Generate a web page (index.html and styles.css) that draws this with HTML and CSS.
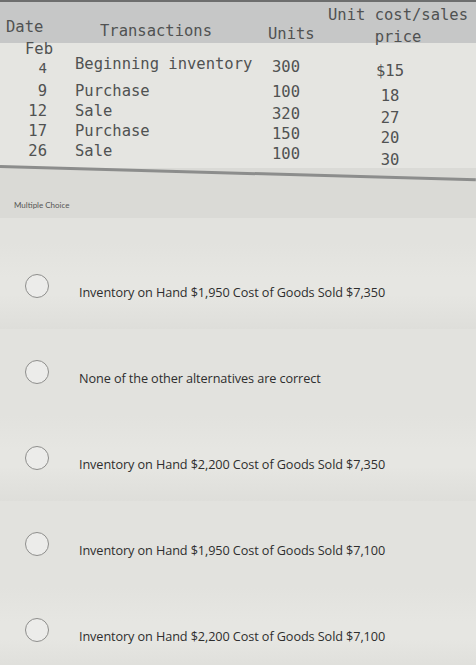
FILE: index.html
```html
<!DOCTYPE html>
<html>
<head>
<meta charset="utf-8">
<link rel="stylesheet" href="styles.css">
</head>
<body>
<div class="page">
  <div class="thead">
    <div class="h-date">Date</div>
    <div class="h-trans">Transactions</div>
    <div class="h-units">Units</div>
    <div class="h-price">Unit cost/sales<br>price</div>
  </div>
  <div class="tbody">
    <div class="feb">Feb</div>
    <div class="row first">
      <div class="c-date d1">4</div><div class="c-trans">Beginning inventory</div><div class="c-units">300</div><div class="c-price">$15</div>
    </div>
    <div class="row second">
      <div class="c-date">9</div><div class="c-trans">Purchase</div><div class="c-units u1">100</div><div class="c-price p1">18</div>
    </div>
    <div class="row">
      <div class="c-date">12</div><div class="c-trans">Sale</div><div class="c-units">320</div><div class="c-price">27</div>
    </div>
    <div class="row">
      <div class="c-date">17</div><div class="c-trans">Purchase</div><div class="c-units">150</div><div class="c-price">20</div>
    </div>
    <div class="row">
      <div class="c-date">26</div><div class="c-trans">Sale</div><div class="c-units">100</div><div class="c-price p-last">30</div>
    </div>
    <div class="rule"></div>
  </div>
  <div class="mc-label">Multiple Choice</div>
  <div class="options">
    <div class="option band"><span class="radio"></span><span class="opt-text">Inventory on Hand $1,950 Cost of Goods Sold $7,350</span></div>
    <div class="option"><span class="radio"></span><span class="opt-text">None of the other alternatives are correct</span></div>
    <div class="option band"><span class="radio"></span><span class="opt-text">Inventory on Hand $2,200 Cost of Goods Sold $7,350</span></div>
    <div class="option"><span class="radio"></span><span class="opt-text">Inventory on Hand $1,950 Cost of Goods Sold $7,100</span></div>
    <div class="option band"><span class="radio"></span><span class="opt-text">Inventory on Hand $2,200 Cost of Goods Sold $7,100</span></div>
  </div>
</div>
</body>
</html>
```

FILE: styles.css
```css
html, body {
  margin: 0;
  padding: 0;
  background: #e0e0dc;
}
.page {
  width: 476px;
  height: 665px;
  overflow: hidden;
  background: #e1e1dd;
}
.thead {
  height: 41px;
  border-top: 2px solid #6d6e6e;
  background: #c6c7c7;
  font-family: "DejaVu Sans Mono", monospace;
  font-size: 15.5px;
  color: #505252;
  display: grid;
  grid-template-columns: 100px 168px 60px 1fr;
  line-height: 18px;
}
.h-date { padding: 16px 0 0 6px; margin-right: -94px; }
.h-trans { padding-top: 20px; }
.h-units { padding-top: 23px; }
.h-price { text-align: center; padding: 2px 8px 0 0; line-height: 22px; white-space: nowrap; }

.tbody {
  background: #e5e5e1;
  font-family: "DejaVu Sans Mono", monospace;
  font-size: 15.5px;
  color: #505252;
}
.feb {
  height: 12px;
  line-height: 12px;
  width: 53px;
  text-align: right;
}
.row {
  display: grid;
  grid-template-columns: 47px 225px 58px 120px;
  height: 20px;
  line-height: 20px;
}
.row.first { height: 18px; line-height: 18px; }
.row.second { margin-top: 8px; }
.c-date { text-align: right; }
.d1 { padding-top: 4px; font-size: 14px; }
.c-trans { padding-left: 28px; }
.c-units { padding-top: 3px; }
.c-price { text-align: center; padding-top: 7px; }
.u1 { padding-top: 1px; }
.p1 { padding-top: 5px; }
.p-last { padding-top: 9px; }
.rule {
  margin-top: 4px;
  height: 3px;
  background: #8c8d8c;
  transform: rotate(1.6deg);
  transform-origin: left center;
}

.mc-label {
  background: #dadad6;
  font-family: "Lato", sans-serif;
  font-size: 8px;
  color: #555;
  padding: 32px 0 8px 14px;
  line-height: 10px;
  height: 10px;
}
.options {
  padding-top: 25px;
  background: #e2e2de;
}
.option {
  height: 86px;
  display: flex;
  align-items: center;
}
.option.band {
  background: linear-gradient(#e2e2de, #e6e6e2 40%, #e6e6e2 60%, #dededa);
}
.radio {
  width: 22px;
  height: 22px;
  border: 1.5px solid #8e8e8c;
  border-radius: 50%;
  background: #ececea;
  margin-left: 25px;
  flex: none;
}
.opt-text {
  margin-left: 30px;
  margin-top: 12px;
  font-family: "Open Sans", sans-serif;
  font-size: 12.7px;
  font-weight: 500;
  color: #2e2e2e;
  letter-spacing: -0.1px;
  white-space: nowrap;
}
```
